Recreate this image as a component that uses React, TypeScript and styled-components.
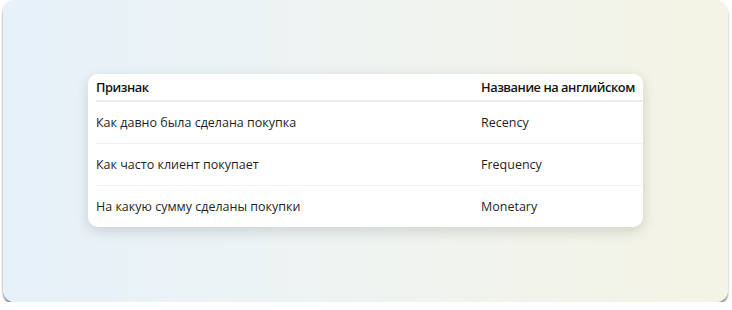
import React from "react"
import styled, { createGlobalStyle } from "styled-components"

const GlobalStyle = createGlobalStyle`
    html, body {
        margin: 0;
        padding: 0;
        background: #ffffff;
    }
    body {
        font-family: "Open Sans", "Noto Sans", sans-serif;
    }
`

const Frame = styled.div`
    box-sizing: border-box;
    margin: 0 4px 0 3px;
    height: 302px;
    border-radius: 12px;
    background: linear-gradient(90deg, #e6f1fa 0%, #eef3f2 45%, #f4f3e4 100%);
    box-shadow: 0 3px 2px rgba(60, 60, 60, 0.55), -1px 0 1px rgba(0, 0, 0, 0.08);
    display: flex;
    align-items: flex-start;
    justify-content: center;
    padding-top: 74px;
`

const Card = styled.div`
    box-sizing: border-box;
    width: 555px;
    background: #ffffff;
    border-radius: 10px;
    box-shadow: 0 4px 14px rgba(0, 0, 0, 0.14);
    padding-left: 8px;
`

const Table = styled.table`
    width: 100%;
    table-layout: fixed;
    border-collapse: collapse;
    color: #1f1f1f;
    font-size: 12.5px;
    white-space: nowrap;
`

const HeadCell = styled.th<{ $w?: number }>`
    text-align: left;
    font-size: 12.8px;
    font-weight: 600;
    letter-spacing: -0.45px;
    color: #141414;
    height: 26px;
    padding: 0;
    border-bottom: 2px solid #ececec;
    width: ${(p) => (p.$w ? `${p.$w}px` : "auto")};
`

const Row = styled.tr<{ $last?: boolean }>`
    height: 42px;
    border-bottom: ${(p) => (p.$last ? "none" : "1px solid #f1f1f1")};
`

const Cell = styled.td`
    padding: 0;
    font-weight: 400;
`

const rows = [
    { feature: "Как давно была сделана покупка", name: "Recency" },
    { feature: "Как часто клиент покупает", name: "Frequency" },
    { feature: "На какую сумму сделаны покупки", name: "Monetary" },
]

export default function App() {
    return (
        <>
            <GlobalStyle />
            <Frame>
                <Card>
                    <Table>
                        <thead>
                            <tr>
                                <HeadCell $w={385}>Признак</HeadCell>
                                <HeadCell>Название на английском</HeadCell>
                            </tr>
                        </thead>
                        <tbody>
                            {rows.map((r, i) => (
                                <Row key={r.name} $last={i === rows.length - 1}>
                                    <Cell>{r.feature}</Cell>
                                    <Cell>{r.name}</Cell>
                                </Row>
                            ))}
                        </tbody>
                    </Table>
                </Card>
            </Frame>
        </>
    )
}
